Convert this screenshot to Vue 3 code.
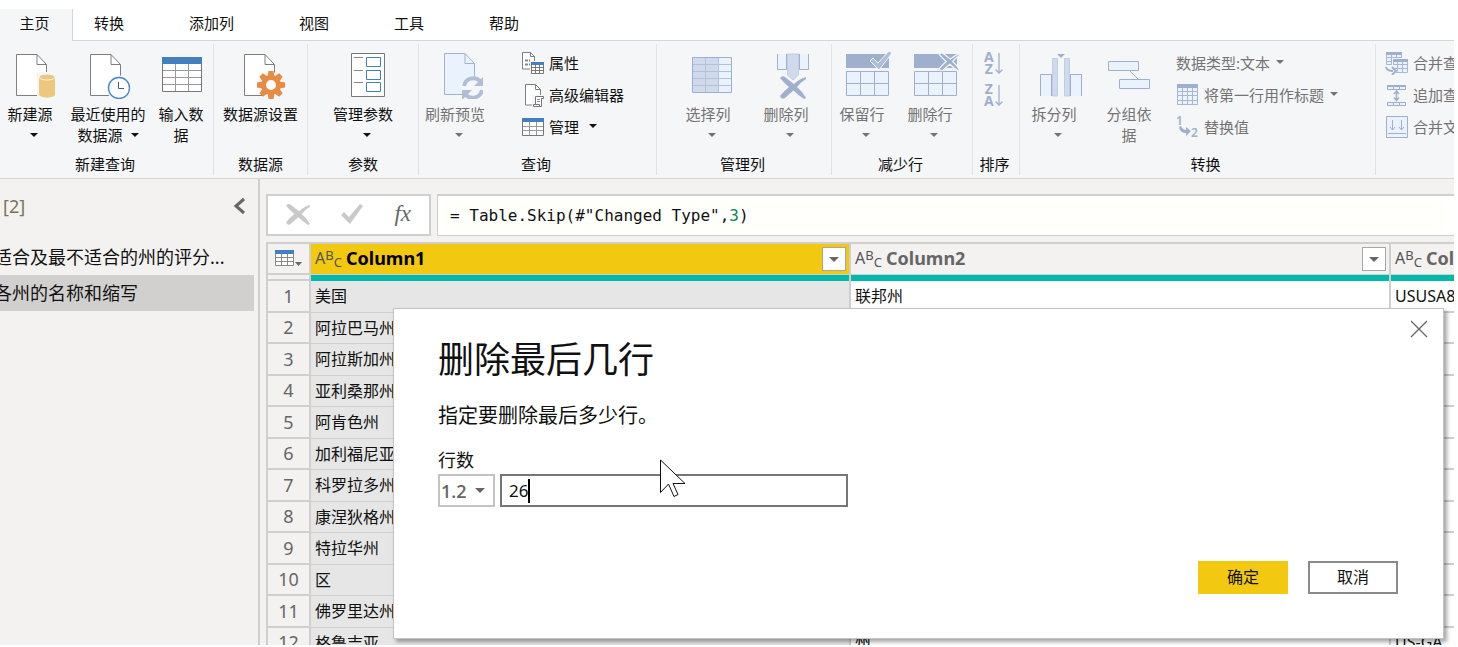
<script setup>
import { ref } from 'vue'

const tabs = ['转换', '添加列', '视图', '工具', '帮助']

const groups = [
  {
    key: 'new', title: '新建查询',
    big: [
      { icon: 'new-source', lines: ['新建源'], arrow: 'below', size: 'w68' },
      { icon: 'recent', lines: ['最近使用的', '数据源'], arrow: 'inline', size: 'w80' },
      { icon: 'enter-data', lines: ['输入数', '据'], size: 'w66' }
    ]
  },
  { key: 'source', title: '数据源', big: [{ icon: 'settings', lines: ['数据源设置'], size: 'full' }] },
  { key: 'params', title: '参数', big: [{ icon: 'params', lines: ['管理参数'], arrow: 'below', size: 'full' }] },
  {
    key: 'query', title: '查询',
    big: [{ icon: 'refresh', lines: ['刷新预览'], arrow: 'below', disabled: true, size: 'w80' }],
    small: [
      { icon: 'properties', label: '属性' },
      { icon: 'editor', label: '高级编辑器' },
      { icon: 'manage', label: '管理', arrow: true }
    ]
  },
  {
    key: 'columns', title: '管理列',
    big: [
      { icon: 'choose-columns', lines: ['选择列'], arrow: 'below', disabled: true, size: 'w78' },
      { icon: 'remove-columns', lines: ['删除列'], arrow: 'below', disabled: true, size: 'w78' }
    ]
  },
  {
    key: 'rows', title: '减少行',
    big: [
      { icon: 'keep-rows', lines: ['保留行'], arrow: 'below', disabled: true, size: 'w68' },
      { icon: 'remove-rows', lines: ['删除行'], arrow: 'below', disabled: true, size: 'w68' }
    ]
  },
  {
    key: 'sort', title: '排序',
    small: [
      { letters: ['A', 'Z'], aria: '升序排序', disabled: true },
      { letters: ['Z', 'A'], aria: '降序排序', disabled: true }
    ]
  },
  {
    key: 'transform', title: '转换',
    big: [
      { icon: 'split', lines: ['拆分列'], arrow: 'below', disabled: true, size: 'w76' },
      { icon: 'group-by', lines: ['分组依', '据'], disabled: true, size: 'w66' }
    ],
    small: [
      { label: '数据类型:文本', arrow: true, disabled: true },
      { icon: 'first-row', label: '将第一行用作标题', arrow: true, disabled: true },
      { numbers: ['1', '2'], label: '替换值', disabled: true }
    ]
  },
  {
    key: 'combine', title: '',
    small: [
      { icon: 'merge', label: '合并查询', disabled: true },
      { icon: 'append', label: '追加查询', disabled: true },
      { icon: 'combine-files', label: '合并文件', disabled: true }
    ]
  }
]

const columns = ['Column1', 'Column2', 'Column3']
const rows = [
  ['美国', '联邦州', 'USUSA840'],
  ['阿拉巴马州', '', ''],
  ['阿拉斯加州', '', ''],
  ['亚利桑那州', '', ''],
  ['阿肯色州', '', ''],
  ['加利福尼亚州', '', ''],
  ['科罗拉多州', '', ''],
  ['康涅狄格州', '', ''],
  ['特拉华州', '', ''],
  ['区', '', ''],
  ['佛罗里达州', '', ''],
  ['格鲁吉亚', '州', 'US-GA']
]

const rowCount = ref('26')
</script>

<template>
  <div class="app">
    <svg class="defs" width="0" height="0" aria-hidden="true">
      <symbol id="page" viewBox="0 0 48 48">
        <path d="M6.500 3.500h20.500l9.500 10v31h-30z" fill="#fff" stroke="#7f7f7f" />
        <path d="M27 3.500v10h9.500" fill="none" stroke="#7f7f7f" />
      </symbol>
      <symbol id="new-source" viewBox="0 0 48 48">
        <use href="#page" width="48" height="48" />
        <path d="M27 21h20v27h-20z" fill="#f5f6f8" />
        <path d="M29 26v17.500c0 4 16 4 16 0V26z" fill="#edc77d" />
        <ellipse cx="37" cy="26" rx="8" ry="3" fill="#edc77d" stroke="#f5f6f8" />
      </symbol>
      <symbol id="recent" viewBox="0 0 48 48">
        <use href="#page" width="48" height="48" />
        <circle cx="35" cy="37" r="12.500" fill="#f5f6f8" />
        <circle cx="35" cy="37" r="10.500" fill="#fff" stroke="#4a86c5" stroke-width="1.300" />
        <path d="M34.500 31v6.500h5.500" fill="none" stroke="#555" />
      </symbol>
      <symbol id="enter-data" viewBox="0 0 48 48">
        <path d="M5.500 6.500h39v34h-39z" fill="#fff" stroke="#777" />
        <path d="M6 19.500h38M6 26.500h38M6 33.500h38M18.500 13v27M31.500 13v27" stroke="#9a9a9a" />
        <path d="M5 6h40v7H5z" fill="#4480bd" />
      </symbol>
      <symbol id="settings" viewBox="0 0 48 48">
        <use href="#page" x="1" width="48" height="48" />
        <circle cx="34" cy="34" r="13" fill="#f5f6f8" />
        <g fill="#e78c45">
          <path d="M31.500 20h5l1 6h-7zM31.500 48h5l1-6h-7z" />
          <path d="M31.500 20h5l1 6h-7zM31.500 48h5l1-6h-7z" transform="rotate(45 34 34)" />
          <path d="M31.500 20h5l1 6h-7zM31.500 48h5l1-6h-7z" transform="rotate(90 34 34)" />
          <path d="M31.500 20h5l1 6h-7zM31.500 48h5l1-6h-7z" transform="rotate(135 34 34)" />
        </g>
        <circle cx="34" cy="34" r="7.500" fill="#fff" stroke="#e78c45" stroke-width="5" />
      </symbol>
      <symbol id="params" viewBox="0 0 48 48">
        <path d="M8.500 2.500h33v43h-33z" fill="#fff" stroke="#777" />
        <path d="M11 6.500h9M11 19.500h9M11 31.500h9" stroke="#888" />
        <path d="M23.500 6.500h14v9h-14zM23.500 19.500h14v9h-14zM23.500 31.500h14v9h-14z" fill="#fff" stroke="#4480bd" />
      </symbol>
      <symbol id="refresh" viewBox="0 0 48 48">
        <path d="M9.500 2.500h20.500l9.500 10v31h-30z" fill="#eaf2fe" stroke="#a0b2cf" />
        <path d="M30 2.500v10h9.500" fill="none" stroke="#a0b2cf" />
        <circle cx="38" cy="37" r="12" fill="#f5f6f8" />
        <path d="M29 35a9.500 9.500 0 0 1 16-5M47 39a9.500 9.500 0 0 1-16 5" fill="none" stroke="#b0bdd3" stroke-width="4" />
        <path d="M49 25v10h-10zM27 49v-10h10z" fill="#b0bdd3" />
      </symbol>
      <symbol id="choose-columns" viewBox="0 0 48 48">
        <path d="M4.500 6.500h39v35h-39z" fill="#eaf2fe" />
        <path d="M5 7h26v34H5z" fill="#cfdbec" />
        <path d="M5 13.500h38M5 20.500h38M5 27.500h38M5 34.500h38M17.500 7v34M30.500 7v34" stroke="#b3c1d9" />
        <path d="M4.500 6.500h39v35h-39z" fill="none" stroke="#9db0cd" />
      </symbol>
      <symbol id="cross" viewBox="0 0 26 24" overflow="visible">
        <path d="M0 3 Q2 0 5 2 Q10 6 14 9 Q19 4 26 2 L26 4 Q21 7 17 12 Q23 17 26 23 L24 24 Q18 20 13.500 15.500 Q9 19 5 23 Q1 25 0 21 Q4 16 9 12 Q4 8 0 3z" />
      </symbol>
      <symbol id="remove-columns" viewBox="0 0 48 48">
        <path d="M11.500 3v15.500h9V3M33.500 3v15.500h9V3" fill="#eaf2fe" stroke="#a0b2cf" />
        <path d="M21.500 3v21l5.500 5 5.500-5V3z" fill="#cfdbec" stroke="#c0cde2" />
        <use href="#cross" x="14" y="24" width="26" height="24" fill="#9fb0ce" />
      </symbol>
      <symbol id="rows-base" viewBox="0 0 48 48">
        <path d="M4 3h43v14H4z" fill="#9fb0ce" />
        <path d="M4.500 20.500h42v24h-42zM4.500 32.500h42M18.500 20.500v24M32.500 20.500v24" fill="#eaf2fe" stroke="#9fb0ce" />
      </symbol>
      <symbol id="keep-rows" viewBox="0 0 48 48" overflow="visible">
        <use href="#rows-base" width="48" height="48" />
        <path d="M28 10l3-3 5 5L47 0l3 2-13 17z" fill="#b0bfd8" stroke="#f5f6f8" />
      </symbol>
      <symbol id="remove-rows" viewBox="0 0 48 48" overflow="visible">
        <use href="#rows-base" width="48" height="48" />
        <use href="#cross" x="29" y="1" width="21" height="19" fill="#9fb0ce" stroke="#f5f6f8" stroke-width="1.500" />
      </symbol>
      <symbol id="split" viewBox="0 0 48 48">
        <path d="M6.500 45V23.500h11V45M36.500 45V23.500h11V45" fill="#eaf2fe" stroke="#9fb0ce" />
        <path d="M18.500 7.500h5V45h-5zM30.500 7.500h5V45h-5z" fill="#cfdbec" stroke="#c0cde2" />
        <path d="M23 3h8l-4 4z" fill="#9fb0ce" />
      </symbol>
      <symbol id="group-by" viewBox="0 0 48 48">
        <path d="M3.500 10.500h30v9h-30zM14.500 28.500h30v9h-30zM25 20l8 8" fill="#eaf2fe" stroke="#9fb0ce" />
      </symbol>
      <symbol id="properties" viewBox="0 0 24 24">
        <path d="M1.500 1.500h8l4 4v12.500h-12z" fill="#fff" stroke="#7f7f7f" />
        <path d="M9.500 1.500v4h4" fill="none" stroke="#7f7f7f" />
        <path d="M4 9.500h3M4 13.500h3M8 9.500h1M8 13.500h1" stroke="#888" stroke-width="2" />
        <path d="M9 10h14v14H9z" fill="#f5f6f8" />
        <path d="M10.500 12.500h12v10h-12zM10.500 16.500h12M10.500 19.500h12M14.500 13v9M18.500 13v9" fill="#fff" stroke="#777" />
        <path d="M10 11h13v3H10z" fill="#4480bd" />
      </symbol>
      <symbol id="editor" viewBox="0 0 24 24">
        <path d="M4.500 1.500h10l5 5v15.500h-15z" fill="#fff" stroke="#7f7f7f" />
        <path d="M14.500 1.500v5h5" fill="none" stroke="#7f7f7f" />
        <path d="M11 12h12v12H11z" fill="#f5f6f8" />
        <path d="M14.500 21v-7.500h8v2h-2v8h-8v-2h6v2" fill="#fff" stroke="#777" />
        <path d="M16 16.500h3M16 18.500h3" stroke="#888" />
      </symbol>
      <symbol id="manage" viewBox="0 0 24 24">
        <path d="M1.500 3.500h21v17h-21z" fill="#fff" stroke="#777" />
        <path d="M2 11.500h20M2 15.500h20M8.500 7v13M15.500 7v13" stroke="#9a9a9a" />
        <path d="M1 3h22v4H1z" fill="#4480bd" />
      </symbol>
      <symbol id="first-row" viewBox="0 0 24 24">
        <path d="M1.500 2.500h20v19h-20zM2 8.500h19M2 12.500h19M2 17.500h19M6.500 5v16M11.500 5v16M16.500 5v16" fill="#eaf2fe" stroke="#a8b8d4" />
        <path d="M1 1h21v4H1z" fill="#9fb0ce" />
      </symbol>
      <symbol id="merge" viewBox="0 0 24 24">
        <path d="M1.500 1.500h15v12h-15zM1 6.500h15M1 10.500h15M6.500 3v10M11.500 3v10" fill="#eaf2fe" stroke="#a8b8d4" />
        <path d="M1 1h16v3H1z" fill="#9fb0ce" />
        <path d="M7 7h17v17H7z" fill="#f5f6f8" />
        <path d="M8.500 8.500h14v13h-14zM8 13.500h15M8 17.500h15M12.500 10v12M17.500 10v12" fill="#eaf2fe" stroke="#a8b8d4" />
        <path d="M8 8h15v3H8z" fill="#9fb0ce" />
        <path d="M0 14h9v4l4 2-5 4H0z" fill="#f5f6f8" />
        <path d="M1 16q1 4 7 4M7 16l4 4-4 4" fill="none" stroke="#9fb0ce" stroke-width="2" />
      </symbol>
      <symbol id="append" viewBox="0 0 24 24">
        <path d="M2.500 2.500h18v4h-18zM2.500 19.500h18v3h-18zM8.500 3v4M14.500 3v4M8.500 20v3M14.500 20v3" fill="#eaf2fe" stroke="#9fb0ce" />
        <path d="M2 2h19v2H2z" fill="#9fb0ce" />
        <path d="M11.500 8v9M9 11l2.500-3 2.500 3M9 14.500l2.500 3 2.500-3" fill="none" stroke="#9fb0ce" stroke-width="1.500" />
      </symbol>
      <symbol id="combine-files" viewBox="0 0 24 24">
        <path d="M1.500 1.500h21v21h-21z" fill="#eaf2fe" stroke="#9fb0ce" />
        <path d="M3 18.500h18M7.500 5v10M5 12l2.500 3 2.500-3M16.500 5v10M14 12l2.500 3 2.500-3" fill="none" stroke="#9fb0ce" />
      </symbol>
    </svg>

    <nav class="tabs">
      <button class="tab home">主页</button>
      <div class="tab-rest">
        <button v-for="t in tabs" :key="t" class="tab">{{ t }}</button>
      </div>
    </nav>

    <section class="ribbon">
      <div v-for="g in groups" :key="g.key" class="group" :class="g.key">
        <div class="tools">
          <button v-for="b in g.big" :key="b.icon" class="big" :class="b.size" :disabled="b.disabled">
            <svg class="icon48"><use :href="'#' + b.icon" /></svg>
            <span class="label" :class="{ shifted: b.arrow === 'below' }">
              <span v-for="(l, i) in b.lines" :key="l" class="line">{{ l }}<i v-if="b.arrow === 'inline' && i === b.lines.length - 1" class="caret gap"></i></span>
            </span>
            <span v-if="b.arrow === 'below'" class="line arrow-line"><i class="caret"></i></span>
          </button>
          <div v-if="g.small" class="small-list">
            <button v-for="s in g.small" :key="s.icon || s.label || s.aria" class="small" :disabled="s.disabled" :aria-label="s.aria">
              <svg v-if="s.icon" class="icon24"><use :href="'#' + s.icon" /></svg>
              <span v-if="s.letters" class="sort-icon">
                <span class="letters"><span v-for="l in s.letters" :key="l">{{ l }}</span></span>
                <svg width="8" height="24" viewBox="0 0 8 24"><path d="M4 2v20M.5 18.500L4 22l3.500-3.500" fill="none" stroke="#9fb0ce" stroke-width="1.300" /></svg>
              </span>
              <span v-if="s.numbers" class="replace-icon">
                <span>{{ s.numbers[0] }}</span>
                <svg width="12" height="12" viewBox="0 0 12 12"><path d="M0 2l2-1q2 4 5 4V2l5 4-5 5V8q-6 0-7-6z" fill="#9fb0ce" /></svg>
                <span class="to">{{ s.numbers[1] }}</span>
              </span>
              <span v-if="s.label">{{ s.label }}</span>
              <i v-if="s.arrow" class="caret"></i>
            </button>
          </div>
        </div>
        <div class="group-title">{{ g.title }}</div>
      </div>
    </section>

    <div class="body">
      <aside class="queries">
        <div class="queries-head">
          <span>[2]</span>
          <button class="plain" aria-label="折叠">
            <svg width="12" height="18" viewBox="0 0 12 18"><path d="M11 2L3 9l8 7" fill="none" stroke="#666" stroke-width="3" /></svg>
          </button>
        </div>
        <ul>
          <li><span>适合及最不适合的州的评分...</span></li>
          <li class="selected"><span>各州的名称和缩写</span></li>
        </ul>
      </aside>

      <main class="workspace">
        <div class="formula">
          <div class="formula-tools">
            <button class="plain" aria-label="取消编辑">
              <svg width="24" height="22"><use href="#cross" width="24" height="22" fill="#c9c9c9" /></svg>
            </button>
            <button class="plain" aria-label="确认编辑">
              <svg width="22" height="20" viewBox="0 0 22 20"><path d="M0 11l3-3 5 5L19 0l3 2L9 20z" fill="#c9c9c9" /></svg>
            </button>
            <button class="plain fx" aria-label="添加步骤">fx</button>
          </div>
          <div class="formula-text"><code>= Table.Skip(#"Changed Type",<b>3</b>)</code></div>
        </div>

        <table class="grid">
          <colgroup><col class="c-index" /><col class="c-wide" /><col class="c-wide" /><col /></colgroup>
          <thead>
            <tr class="head">
              <th class="corner">
                <button class="plain corner-btn" aria-label="表菜单">
                  <svg width="28" height="20" viewBox="0 0 28 20">
                    <path d="M.5 1.500h18v15h-18zM1 8.500h17M1 12.500h17M6.500 5v11M12.500 5v11" fill="#fff" stroke="#888" />
                    <path d="M0 1h19v4H0z" fill="#4480bd" />
                    <path d="M20 13h7l-3.500 4z" fill="#666" />
                  </svg>
                </button>
              </th>
              <th v-for="(c, i) in columns" :key="c" :class="{ active: i === 0 }">
                <div class="th-inner">
                  <span class="abc">A<sup>B</sup><sub>C</sub></span>
                  <span class="name">{{ c }}</span>
                  <button class="filter" aria-label="筛选"><i class="caret"></i></button>
                </div>
              </th>
            </tr>
            <tr class="quality"><td class="corner"></td><td></td><td></td><td></td></tr>
          </thead>
          <tbody>
            <tr v-for="(r, i) in rows" :key="i">
              <th scope="row">{{ i + 1 }}</th>
              <td v-for="(v, j) in r" :key="j" :class="{ picked: j === 0 }">{{ v }}</td>
            </tr>
          </tbody>
        </table>
      </main>
    </div>

    <div class="dialog" role="dialog" aria-labelledby="dlg-title">
      <button class="plain close" aria-label="关闭">
        <svg width="18" height="18" viewBox="0 0 18 18"><path d="M1 1l16 16M17 1L1 17" stroke="#666" stroke-width="1.300" /></svg>
      </button>
      <h1 id="dlg-title">删除最后几行</h1>
      <p>指定要删除最后多少行。</p>
      <label for="row-count">行数</label>
      <div class="fields">
        <div class="type">
          <select aria-label="类型"><option>1.2</option></select>
          <i class="caret"></i>
        </div>
        <div class="number">
          <input id="row-count" v-model="rowCount" type="text" />
          <i class="text-caret"></i>
        </div>
      </div>
      <div class="actions">
        <button class="ok">确定</button>
        <button class="cancel">取消</button>
      </div>
    </div>

    <svg class="pointer" width="26" height="39" viewBox="0 0 26 39" aria-hidden="true">
      <path d="M.5 1v32.500l8-8.500 5.500 12.500 4-2-5-11H25z" fill="#fff" stroke="#111" />
    </svg>
  </div>
</template>

<style>
body { background: #fff; overflow: hidden; }
</style>

<style scoped>
.app {
  position: relative;
  display: flex;
  flex-direction: column;
  height: calc(100vh - 2px);
  margin-right: 4px;
  overflow: hidden;
  color: #111;
  font: 15px/21px "Noto Sans", "Noto Sans CJK SC", sans-serif;
}
.app * { box-sizing: border-box; }
.defs { position: absolute; }
button { padding: 0; border: 0; background: none; color: inherit; font: inherit; }
.plain { display: flex; align-items: center; justify-content: center; }
.caret {
  display: inline-block;
  flex: none;
  width: 0;
  height: 0;
  border: 4px solid transparent;
  border-top-color: currentColor;
  border-bottom-width: 0;
}

.tabs { display: flex; flex: none; padding-top: 9px; }
.tab { height: 31px; padding-bottom: 2px; white-space: nowrap; }
.home { width: 73px; height: 32px; padding: 0 3px 3px 0; background: #f5f6f8; border-right: 1px solid #d6d6d6; }
.tab-rest { display: flex; flex: 1; gap: 65px; padding-left: 21px; border-bottom: 1px solid #d6d6d6; }

.ribbon {
  display: grid;
  flex: none;
  grid-template-columns: 214px 94px 111px 238px 175px 141px 47px 356px 1fr;
  padding: 3px 0;
  background: #f5f6f8;
  border-bottom: 1px solid #d6d6d6;
}
.group { display: flex; flex-direction: column; min-width: 0; overflow: hidden; border-right: 1px solid #e1e2e5; }
.group:last-child { border-right: 0; }
.tools { display: flex; height: 110px; padding-top: 7px; }
.group-title { height: 21px; padding-right: 3px; text-align: center; }
.source .group-title, .params .group-title { padding-right: 0; }
.transform .group-title { padding: 0 0 0 16px; }
.big { display: flex; flex: none; flex-direction: column; align-items: center; height: 100px; white-space: nowrap; }
.big:disabled, .small:disabled { color: #737373; }
.icon48 { flex: none; width: 48px; height: 48px; margin-bottom: 5px; overflow: visible; }
.label { display: block; }
.shifted { padding-right: 8px; }
.line { display: block; height: 21px; text-align: center; }
.arrow-line { display: flex; align-items: center; padding-bottom: 2px; }
.gap { margin: 0 0 4px 8px; }
.w66 { width: 66px; }
.w68 { width: 68px; }
.w76 { width: 76px; }
.w78 { width: 78px; }
.w80 { width: 80px; }
.full { width: 100%; }
.params .tools { padding-left: 8px; }
.columns .tools { padding-left: 16px; }
.small-list { display: flex; flex-direction: column; margin-top: -4px; padding-left: 22px; }
.small { display: flex; align-items: center; gap: 4px; height: 32px; white-space: nowrap; }
.small .caret { margin: 0 0 2px 2px; }
.query .small .caret { margin-left: 6px; }
.sort .small-list { padding-left: 11px; }
.transform .small-list { padding-left: 14px; }
.combine .small-list { padding-left: 9px; }
.icon24 { flex: none; width: 24px; height: 24px; overflow: visible; }
.sort-icon { display: flex; align-items: center; gap: 1px; color: #9fb0ce; }
.letters { display: flex; flex-direction: column; font-size: 14px; font-weight: 700; line-height: 12px; text-align: center; }
.replace-icon { display: flex; flex: none; align-items: center; width: 24px; height: 24px; color: #9fb0ce; font-size: 12px; font-weight: 600; line-height: 12px; }
.replace-icon > span:first-child { align-self: flex-start; margin-right: -4px; }
.replace-icon .to { align-self: flex-end; }
.replace-icon svg { flex: none; margin-top: 8px; }

.body { display: flex; flex: 1; min-height: 0; background: #f3f2f1; }
.queries { flex: none; width: 260px; overflow: hidden; border-right: 2px solid #d0cfcd; }
.queries-head {
  display: flex;
  align-items: center;
  justify-content: space-between;
  height: 60px;
  padding: 0 13px 6px 3px;
  color: #7d7455;
  font-size: 18px;
}
.queries ul { margin: 0; padding: 0; list-style: none; font-size: 18px; }
.queries li { display: flex; align-items: center; height: 36px; margin-right: 4px; overflow: hidden; white-space: nowrap; }
.queries li span { flex: none; margin-left: -6px; }
.selected { background: #d2d0ce; }

.workspace { flex: 1; min-width: 0; padding: 15px 0 0 6px; overflow: hidden; }
.formula { display: flex; gap: 6px; height: 42px; margin-bottom: 6px; }
.formula-tools {
  display: flex;
  align-items: center;
  justify-content: space-between;
  width: 165px;
  padding: 0 18px 2px;
  background: #fff;
  border: 2px solid #d0cfcd;
}
.fx { color: #666; font: italic 23px/24px "Liberation Serif", serif; }
.formula-text {
  display: flex;
  flex: 1;
  align-items: center;
  padding-left: 12px;
  background: #fffffc;
  border: solid #d0cfcd;
  border-width: 2px 0 1px 1px;
}
.formula-text code { font: 16px/21px "DejaVu Sans Mono", monospace; white-space: pre; }
.formula-text b { color: #098658; font-weight: 400; }

.grid { width: 100%; table-layout: fixed; border-spacing: 0; border-left: 2px solid #d0cfcd; border-top: 2px solid #d0cfcd; }
.c-index { width: 43px; }
.c-wide { width: 540px; }
.grid th, .grid td {
  padding: 0 0 0 4px;
  overflow: hidden;
  text-align: left;
  white-space: nowrap;
  border-right: 2px solid #d0cfcd;
}
.grid th:last-child, .grid td:last-child { border-right: 0; }
.head th { height: 31px; border-bottom: 1px solid #d0cfcd; }
.head th.active { background: #f2c811; color: #000; }
.head .corner { padding: 0 0 0 7px; border-bottom-width: 2px; }
.th-inner { display: flex; align-items: center; height: 30px; padding-right: 3px; color: #666; font-size: 18px; }
.name { padding-bottom: 2px; }
.active .name { color: #000; }
.abc { flex: none; width: 31px; padding-bottom: 2px; font-size: 16px; font-weight: 400; color: #555; }
.abc sup, .abc sub { font-size: 13px; line-height: 0; }
.abc sup { vertical-align: 4px; }
.abc sub { vertical-align: -3px; }
.filter {
  display: flex;
  flex: none;
  align-items: center;
  justify-content: center;
  width: 24px;
  height: 24px;
  margin-left: auto;
  background: #fff;
  border: 1px solid #a6a6a6;
  color: #666;
}
.filter .caret, .type .caret { border-width: 5px 5px 0; }
.quality td { height: 6px; background: #01b8aa; }
.grid .quality .corner { background: #f3f2f1; border-bottom: 2px solid #d0cfcd; }
.grid tbody th { height: 32px; padding: 0; color: #666; font-size: 18px; font-weight: 400; text-align: center; border-bottom: 2px solid #d0cfcd; }
.grid tbody td { background: #fff; font-size: 16px; border-bottom: 2px solid #d0cfcd; }
.grid tbody tr:nth-child(even) th { height: 31px; }
.grid tbody td.picked { background: #e6e6e6; border-bottom-width: 1px; }

.dialog {
  position: absolute;
  top: 308px;
  left: 393px;
  right: 10px;
  display: flex;
  flex-direction: column;
  padding: 27px 45px 44px 44px;
  background: #fff;
  border: 1px solid #c3c3c3;
  box-shadow: 3px 3px 4px rgba(0, 0, 0, 0.35);
}
.close { position: absolute; top: 11px; right: 15px; }
.dialog h1 { margin: 0 0 18px; font-size: 36px; font-weight: 400; line-height: 48px; }
.dialog p { margin: 0 0 18px; font-size: 20px; line-height: 28px; }
.dialog label { margin-bottom: 2px; font-size: 18px; line-height: 24px; }
.fields { display: flex; gap: 5px; height: 33px; margin-bottom: 54px; }
.type { position: relative; width: 57px; }
.type select {
  width: 100%;
  height: 100%;
  padding: 0 0 0 1px;
  appearance: none;
  background: #fff;
  border: 2px solid #c3c3c3;
  border-radius: 0;
  color: #666;
  font: 600 18px/24px "Open Sans", sans-serif;
}
.type .caret { position: absolute; top: 14px; right: 10px; color: #666; }
.number { position: relative; width: 348px; }
.number input {
  width: 100%;
  height: 100%;
  padding: 0 7px;
  background: #fff;
  border: 2px solid #767676;
  color: #111;
  font: 17px/24px "Noto Sans", sans-serif;
}
.text-caret { position: absolute; top: 5px; left: 28px; width: 2px; height: 24px; background: #000; }
.actions { display: flex; justify-content: flex-end; gap: 20px; }
.actions button { width: 90px; height: 33px; font-size: 16px; }
.ok { background: #f2c811; }
.actions .cancel { background: #fff; border: 2px solid #8a8a8a; }

.pointer { position: absolute; top: 459px; left: 660px; }
</style>
